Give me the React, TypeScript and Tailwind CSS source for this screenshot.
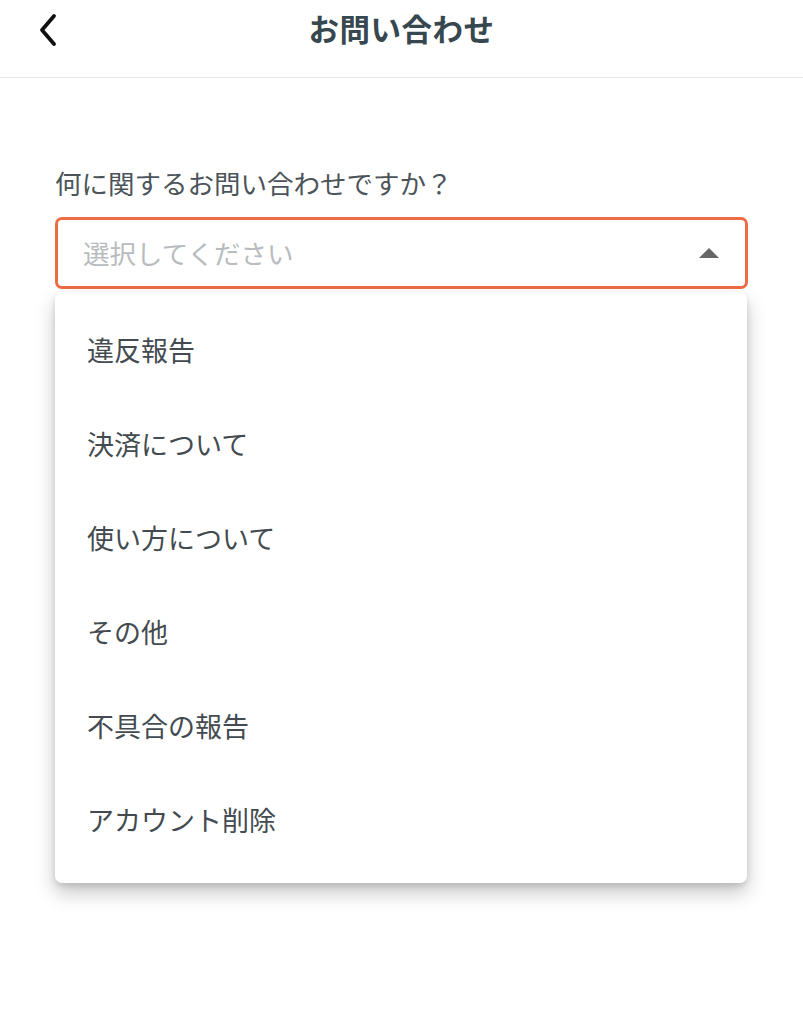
import React from "react";

const items = ["違反報告", "決済について", "使い方について", "その他", "不具合の報告", "アカウント削除"];

export default function App() {
  return (
    <div
      className="w-[803px] h-[1024px] bg-white relative overflow-hidden"
      style={{ fontFamily: '"Noto Sans CJK JP", "Noto Sans", sans-serif' }}
    >
      <header className="h-[78px] border-b border-[#e8e8e8] flex items-center justify-center relative">
        <button className="absolute left-[36px] top-[12px] w-[24px] h-[36px] flex items-center justify-center">
          <svg width="22" height="34" viewBox="0 0 22 34" fill="none">
            <path d="M17 3 L5 17 L17 31" stroke="#111" strokeWidth="3.8" strokeLinecap="round" strokeLinejoin="round" />
          </svg>
        </button>
        <h1 className="text-[30.5px] leading-[40px] font-bold text-[#37474f] -mt-[22px] tracking-[0.5px]">お問い合わせ</h1>
      </header>

      <div className="px-[55px] pt-[86px]">
        <label className="block text-[26.5px] leading-[38px] text-[#4b5459]">何に関するお問い合わせですか？</label>
        <div className="relative mt-[15px]">
          <div className="h-[72px] rounded-[7px] border-[3px] border-[#ee6c44] flex items-center pl-[25px] pr-[26px] justify-between">
            <span className="text-[26.5px] text-[#b8bcbe]">選択してください</span>
            <svg width="20" height="10" viewBox="0 0 20 10">
              <path d="M0 10 L10 0 L20 10 Z" fill="#666" />
            </svg>
          </div>
          <div className="absolute left-0 right-[1px] top-[75px] bg-white rounded-[7px] shadow-[0_10px_20px_rgba(0,0,0,0.22),0_3px_6px_rgba(0,0,0,0.12)] pt-[11px] pb-[16px]">
            {items.map((t) => (
              <div key={t} className="h-[94px] flex items-center pl-[32px] text-[27px] text-[#434b50]">
                {t}
              </div>
            ))}
          </div>
        </div>
      </div>
    </div>
  );
}
